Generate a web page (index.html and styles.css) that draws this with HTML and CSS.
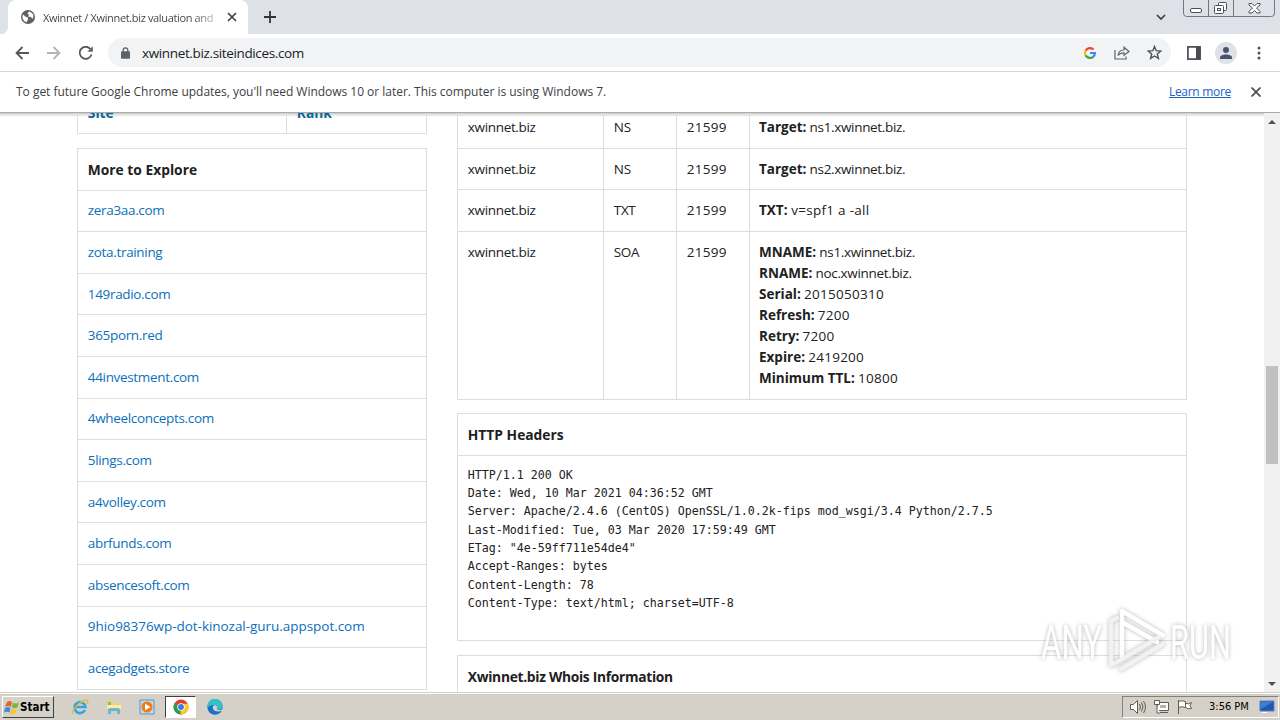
FILE: index.html
```
<!DOCTYPE html>
<html lang="en">
  <head>
    <meta charset="UTF-8" />
    <meta name="viewport" content="width=device-width, initial-scale=1.0" />
    <title>Xwinnet / Xwinnet.biz valuation</title>
    <link rel="stylesheet" href="styles.css">
  </head>
  <body>
    <div class="tabs">
      <div class="tab-left"></div>
      <div class="tab">
        <svg width="14" height="14" viewBox="0 0 14 14">
          <circle cx="7" cy="7" r="7" fill="#5f6368" />
          <path d="M2 4.5L5 7l2 .5v2L5.500 12.200C3 11.500 1.500 9.500 1.400 7zM8 1.500L6.500 3.500 8 5l-1 1.500 3 .5 1.500 2 1-3C12.500 4 10.500 2 8 1.500z" fill="#fff" />
        </svg>
        <span class="tab-title">Xwinnet / Xwinnet.biz valuation and</span>
        <svg class="tab-close" width="10" height="10" viewBox="0 0 10 10"><path d="M1 1l8 8M9 1L1 9" stroke="#3c4043" stroke-width="1.700" /></svg>
      </div>
      <svg class="plus" width="12" height="12" viewBox="0 0 12 12"><path d="M6 0v12M0 6h12" stroke="#303338" stroke-width="1.800" /></svg>
      <svg class="down" width="10" height="7" viewBox="0 0 10 7"><path d="M1 1l4 4 4-4" fill="none" stroke="#3c4043" stroke-width="1.700" /></svg>
      <div class="winbtns">
        <svg width="92" height="17" viewBox="0 0 92 17" fill="none" stroke="#72767e">
          <path d="M.5 0v13q0 3.500 3 3.500h85q3 0 3-3.500V0M25.500 0v16M50.500 0v16" />
          <rect x="7.500" y="8.500" width="11" height="4" rx="1.500" fill="#fff" stroke="#4b4f56" />
          <g stroke="#4b4f56" fill="#fff">
            <rect x="35.500" y="2.500" width="8" height="8" rx="1" />
            <rect x="31.500" y="5.500" width="9" height="8" rx="1" />
            <rect x="34.500" y="8.500" width="3" height="2" />
            <path d="M66 3.500h3l2.500 2.500L74 3.500h3v1.500L73.500 8l3.500 3.500v1.500h-3L71.500 10.500 69 13h-3v-1.500L69.500 8 66 5z" />
          </g>
        </svg>
      </div>
    </div>

    <div class="toolbar">
      <svg class="nav back" width="14" height="14" viewBox="0 0 14 14"><path d="M14 7H1.500M7.500 1L1.500 7l6 6" /></svg>
      <svg class="nav forward" width="14" height="14" viewBox="0 0 14 14"><path d="M0 7h12.500M6.500 1l6 6-6 6" /></svg>
      <svg class="nav reload" width="14" height="14" viewBox="0 0 14 14"><path d="M12.500 8.500A6 6 0 1 1 11.200 2.800L13 4.500" /><path d="M13.800.300v5.400H8.400z" fill="#5f6368" stroke="none" /></svg>
      <div class="address">
        <svg width="9" height="12" viewBox="0 0 9 12"><rect y="4.300" width="9" height="7.500" rx="1" fill="#5f6368" /><path d="M2.200 5V3.100a2.300 2.300 0 0 1 4.600 0V5" fill="none" stroke="#5f6368" stroke-width="1.300" /></svg>
        <span class="url">xwinnet.biz.siteindices.com</span>
        <svg class="google" width="12" height="12" viewBox="0 0 12 12" fill="none" stroke-width="2.200">
          <path d="M9.500 2.500A5 5 0 0 0 1.700 3.600" stroke="#ea4335" />
          <path d="M1.700 3.500a5 5 0 0 0 0 5" stroke="#fbbc05" />
          <path d="M1.700 8.400a5 5 0 0 0 7.500 1.400" stroke="#34a853" />
          <path d="M6 6h4.900a5 5 0 0 1-1.800 3.900" stroke="#4285f4" />
        </svg>
        <svg class="share" width="16" height="14" viewBox="0 0 16 14" fill="none" stroke="#5f6368" stroke-width="1.200"><path d="M1 4v9h11v-2.500M4 9.500C4.500 6 6.500 4 10 4V1.200L15 5.500 10 9.300V6.800C7.500 6.800 5.500 7.500 4 9.500z" /></svg>
        <svg class="star" width="15" height="15" viewBox="0 0 15 15"><path d="M7.500 1.500l1.700 4.200 4.600.300-3.500 3 1.100 4.400-3.900-2.400-3.900 2.400L4.700 9 1.200 6l4.600-.300z" fill="none" stroke="#4f5358" stroke-width="1.400" /></svg>
      </div>
      <svg class="panel" width="14" height="14" viewBox="0 0 14 14"><rect x=".9" y=".9" width="12.200" height="12.200" fill="none" stroke="#484b50" stroke-width="1.700" /><path d="M9 1h4v12H9z" fill="#484b50" /></svg>
      <svg class="avatar" width="22" height="22" viewBox="0 0 22 22"><circle cx="11" cy="11" r="11" fill="#dee1e6" /><circle cx="11" cy="8" r="3" fill="#47546b" /><path d="M5 17v-1.500c0-4 12-4 12 0V17z" fill="#47546b" /></svg>
      <svg class="dots" width="4" height="14" viewBox="0 0 4 14" fill="#4f5358"><circle cx="2" cy="2" r="1.500" /><circle cx="2" cy="7" r="1.500" /><circle cx="2" cy="12" r="1.500" /></svg>
    </div>

    <div class="infobar">
      <span class="info-text">To get future Google Chrome updates, you'll need Windows 10 or later. This computer is using Windows 7.</span>
      <a class="learn" href="#">Learn more</a>
      <svg width="10" height="10" viewBox="0 0 10 10"><path d="M.5.5l9 9M9.500.5l-9 9" stroke="#4f5358" stroke-width="1.800" /></svg>
    </div>

    <div class="viewport">
      <div class="page">
        <div class="side">
          <table class="box ranks">
            <tr><th class="site"><a href="#">Site</a></th><th><a href="#">Rank</a></th></tr>
          </table>
          <table class="box links">
            <tr><th>More to Explore</th></tr>
            <tr><td><a href="#">zera3aa.com</a></td></tr>
            <tr><td><a href="#">zota.training</a></td></tr>
            <tr><td><a href="#">149radio.com</a></td></tr>
            <tr><td><a href="#">365porn.red</a></td></tr>
            <tr><td><a href="#">44investment.com</a></td></tr>
            <tr><td><a href="#">4wheelconcepts.com</a></td></tr>
            <tr><td><a href="#">5lings.com</a></td></tr>
            <tr><td><a href="#">a4volley.com</a></td></tr>
            <tr><td><a href="#">abrfunds.com</a></td></tr>
            <tr><td><a href="#">absencesoft.com</a></td></tr>
            <tr><td><a class="long" href="#">9hio98376wp-dot-kinozal-guru.appspot.com</a></td></tr>
            <tr><td><a href="#">acegadgets.store</a></td></tr>
          </table>
        </div>
        <div class="main">
          <table class="box records">
            <tr><td class="host">xwinnet.biz</td><td class="type">NS</td><td class="ttl num">21599</td><td><b>Target:</b> ns1.xwinnet.biz.</td></tr>
            <tr><td>xwinnet.biz</td><td>NS</td><td class="num">21599</td><td><b>Target:</b> ns2.xwinnet.biz.</td></tr>
            <tr><td>xwinnet.biz</td><td>TXT</td><td class="num">21599</td><td class="num"><b>TXT:</b> v=spf1 a -all</td></tr>
            <tr>
              <td>xwinnet.biz</td><td>SOA</td><td class="num">21599</td>
              <td>
                <b>MNAME:</b> ns1.xwinnet.biz.<br>
                <b>RNAME:</b> noc.xwinnet.biz.<br>
                <b>Serial:</b> <span class="num">2015050310</span><br>
                <b>Refresh:</b> <span class="num">7200</span><br>
                <b>Retry:</b> <span class="num">7200</span><br>
                <b>Expire:</b> <span class="num">2419200</span><br>
                <b>Minimum TTL:</b> <span class="num">10800</span>
              </td>
            </tr>
          </table>
          <table class="box">
            <tr><th>HTTP Headers</th></tr>
            <tr><td><pre>HTTP/1.1 200 OK
Date: Wed, 10 Mar 2021 04:36:52 GMT
Server: Apache/2.4.6 (CentOS) OpenSSL/1.0.2k-fips mod_wsgi/3.4 Python/2.7.5
Last-Modified: Tue, 03 Mar 2020 17:59:49 GMT
ETag: "4e-59ff711e54de4"
Accept-Ranges: bytes
Content-Length: 78
Content-Type: text/html; charset=UTF-8

</pre></td></tr>
          </table>
          <table class="box">
            <tr><th class="whois">Xwinnet.biz Whois Information</th></tr>
          </table>
        </div>
      </div>
      <div class="scrollbar">
        <svg width="8" height="4" viewBox="0 0 8 4"><path d="M0 4l4-4 4 4z" fill="#505050" /></svg>
        <div class="thumb"></div>
        <svg class="scroll-down" width="8" height="4" viewBox="0 0 8 4"><path d="M0 0l4 4 4-4z" fill="#505050" /></svg>
      </div>
      <svg class="watermark" width="200" height="68" viewBox="0 0 200 68">
        <text x="4" y="52" textLength="61" lengthAdjust="spacingAndGlyphs">ANY</text>
        <g fill="none" stroke="#fff" stroke-width="4.500" stroke-linejoin="round" stroke-linecap="round">
          <path d="M85 52V4l41 24.500" />
          <path d="M85 15l35 20" />
          <path d="M80 11l-6 3v44l8-4M85 52l37-22M84 62l42-25" stroke="#f0f0f0" />
        </g>
        <text x="133" y="52" textLength="61" lengthAdjust="spacingAndGlyphs">RUN</text>
      </svg>
    </div>

    <div class="taskbar">
      <div class="start">
        <svg width="16" height="16" viewBox="0 0 16 16"><path d="M3 3q3-2 5 0L7 8Q4 6 1 8z" fill="#e8642c" /><path d="M9 3.500q3 2 6 0L13.500 8.500q-3 1.500-5.500 0z" fill="#76b843" /><path d="M1 9q3-2 5.500 0L5.500 13.500Q3 12 0 13.500z" fill="#3b8ede" /><path d="M7.500 9.500q3 2 5.500 0l-1.500 5q-3 1.500-5.200 0z" fill="#f7c52c" /></svg>
        <b>Start</b>
      </div>
      <svg class="ie" width="18" height="18" viewBox="0 0 18 18" fill="none"><path d="M14 12a5.500 5.500 0 1 1 .5-3H5" stroke="#35a4e4" stroke-width="2.600" /><path d="M2 16C-1 13 10 2 16 2q2 1 0 4" stroke="#e9b93c" stroke-width="1.300" /></svg>
      <svg class="folder" width="16" height="16" viewBox="0 0 16 16"><path d="M1 2h5l1 2h8v9H1z" fill="#ead27b" /><path d="M2 3h3v3H2z" fill="#7fc34e" /><path d="M1 6h14v4H1z" fill="#fbecab" /><path d="M2 15v-4q0-2 2-2h8q2 0 2 2v4h-3v-3H5v3z" fill="#68b6dd" /></svg>
      <svg class="media" width="16" height="16" viewBox="0 0 16 16"><path d="M1 1h14v14H1z" fill="#bdd8ef" stroke="#5f93c4" /><circle cx="8" cy="8" r="5.500" fill="#ef7d16" /><path d="M6 4.700v6.600L11.500 8z" fill="#fff" /></svg>
      <div class="task-active">
        <svg width="16" height="16" viewBox="0 0 16 16"><circle cx="8" cy="8" r="7.500" fill="#e33b2e" /><path d="M8 8L1.500 4.200A7.500 7.500 0 0 0 7.500 15.500z" fill="#2da04e" /><path d="M8 8l-.5 7.500A7.500 7.500 0 0 0 15 4.800H8z" fill="#fcc934" /><circle cx="8" cy="8" r="3.700" fill="#fff" /><circle cx="8" cy="8" r="2.900" fill="#377de8" /></svg>
      </div>
      <svg class="edge" width="16" height="16" viewBox="0 0 16 16"><circle cx="8" cy="8" r="7.700" fill="#1673c6" /><path d="M.5 7A7.600 7.600 0 0 1 15.700 7.500c0 3-4 3.500-6 2.500 1-2 0-4-3-4Q2.500 6 .5 9z" fill="#35bfc7" /><path d="M6 7q-1.500 5 5 5.500 2 0 3.500-1L16 14v-4q-4 2-6.300 0Q11 7 8 6z" fill="#d5d1c9" /></svg>
      <div class="tray">
        <svg class="tray-icons" width="66" height="16" viewBox="0 0 66 16" fill="#fff" stroke="#5f5d58">
          <path d="M1.500 5.500h3l4-4v13l-4-4h-3z" /><path d="M10.500 5q2 3 0 6M12.500 3.500q3 4.500 0 9M14.500 2q4 6 0 12" fill="none" />
          <path d="M28.500 3.500h11v8h-11z" /><path d="M31 13.500h8" /><path d="M31 6h6v3h-6z" fill="#b5b2aa" stroke="none" /><path d="M25.500 1.500h5v4h-5zM28 6v8h3" />
          <path d="M49.500 1v14M49.500 2.500q3-1.500 7 0v6q-4-1.500-7 0M56.500 4.500q3 1 6-1l-1.500 3 1.500 3q-3 1-6-1" />
        </svg>
        <span>3:56 PM</span>
        <svg class="desk" width="16" height="14" viewBox="0 0 16 14"><path d="M1 1h14v10H1z" fill="#1e57ae" stroke="#5c86bd" /><path d="M2 2h12L2 9z" fill="#3a80d1" /><path d="M3 12h5v1H3z" fill="#fff" /></svg>
      </div>
    </div>
  </body>
</html>
```
FILE: styles.css
```
* {
  box-sizing: border-box;
}
body {
  margin: 0;
  width: 1280px;
  height: 720px;
  overflow: hidden;
  display: flex;
  flex-direction: column;
  background: #fff;
  font-family: "Open Sans", "Noto Sans", sans-serif;
}
svg {
  display: block;
  flex: none;
}
a {
  color: #0b70bb;
  text-decoration: none;
}

/* browser chrome */
.tabs {
  display: flex;
  height: 34px;
  flex: none;
  background: #dee1e8;
}
.tab-left {
  width: 8px;
  border-bottom-right-radius: 7px;
  background: #dee1e8;
  box-shadow: 4px 4px 0 #fff;
  clip-path: inset(0);
}
.tab {
  display: flex;
  align-items: center;
  width: 240px;
  padding-left: 13px;
  border-radius: 8px 8px 0 0;
  background: #fff;
}
.tab-title {
  width: 174px;
  margin-left: 8px;
  white-space: nowrap;
  font-size: 11px;
  letter-spacing: -0.35px;
  color: transparent;
  background: linear-gradient(90deg, #3c4043 86%, #ccc);
  -webkit-background-clip: text;
  background-clip: text;
}
.tab-close {
  margin-left: 10px;
}
.plus {
  margin: 11px 0 0 16px;
}
.down {
  margin: 14px 17px 0 auto;
}
.winbtns {
  width: 97px;
}
.toolbar {
  display: flex;
  align-items: center;
  height: 38px;
  flex: none;
  padding-left: 15px;
  border-bottom: 1px solid #d3d5d8;
}
.nav {
  fill: none;
  stroke: #55595e;
  stroke-width: 1.8;
}
.forward {
  margin-left: 18px;
  stroke: #b3b6b9;
}
.reload {
  margin-left: 18px;
}
.address {
  display: flex;
  align-items: center;
  width: 1063px;
  height: 29px;
  margin-left: 15px;
  padding-left: 13px;
  border-radius: 15px;
  background: #f1f3f4;
}
.url {
  margin-left: 12px;
  font-size: 13.5px;
  letter-spacing: -0.36px;
  color: #202124;
}
.google {
  margin-left: auto;
}
.share {
  margin-left: 18px;
}
.star {
  margin: 0 9px 0 17px;
}
.panel {
  margin-left: 16px;
}
.avatar {
  margin-left: 14px;
}
.dots {
  margin-left: 20px;
}
.infobar {
  display: flex;
  align-items: center;
  height: 40px;
  flex: none;
  padding: 0 19px 0 16px;
  font-size: 12px;
  color: #3c4043;
}
.info-text,
.learn {
  margin-top: -2px;
  letter-spacing: -0.02px;
}
.learn {
  margin-right: 20px;
  margin-left: auto;
  letter-spacing: -0.3px;
  color: #1a64c4;
  text-decoration: underline;
}

/* page */
.viewport {
  position: relative;
  display: flex;
  height: 580px;
  flex: none;
  overflow: hidden;
  border-top: 1px solid #aaa;
  background: linear-gradient(#ccc, #fff 4px);
}
.page {
  display: flex;
  gap: 30px;
  width: 1264px;
  padding-left: 77px;
  margin-top: -21.4px;
  font-size: 13.5px;
  line-height: 21px;
  color: #212121;
}
.side {
  width: 350px;
}
.main {
  width: 730px;
  margin-top: 14.6px;
}
.box {
  width: 100%;
  margin-bottom: 13.8px;
  border-collapse: separate;
  border-spacing: 0;
  border: solid #ddd;
  border-width: 1px 0 0 1px;
  table-layout: fixed;
}
.box th,
.box td {
  padding: 9.8px;
  border: solid #ddd;
  border-width: 0 1px 1px 0;
  text-align: left;
  vertical-align: top;
}
.box th {
  font-size: 13.8px;
}
.box .whois {
  letter-spacing: -0.3px;
}
.ranks a {
  color: #0a6797;
}
.links td,
.records td {
  letter-spacing: -0.33px;
}
.links .long {
  letter-spacing: -0.04px;
}
.records b {
  letter-spacing: 0;
}
.records .num {
  letter-spacing: 0.27px;
}
.records td:last-child {
  padding-left: 9px;
}
.site {
  width: 209px;
}
.host {
  width: 146px;
}
.type,
.ttl {
  width: 73px;
}
pre {
  margin: 0;
  font-family: "DejaVu Sans Mono", monospace;
  font-size: 11.63px;
  line-height: 18.3px;
}
.scrollbar {
  display: flex;
  flex-direction: column;
  align-items: center;
  width: 16px;
  padding: 7px 0 6px;
  background: #f1f1f1;
}
.thumb {
  width: 12px;
  height: 98px;
  margin-top: 242px;
  background: #c1c1c1;
}
.scroll-down {
  margin-top: auto;
}
.watermark {
  position: absolute;
  left: 1037px;
  top: 494px;
  overflow: visible;
  opacity: 0.85;
  filter: drop-shadow(0 0 2px #aaa);
}
.watermark text {
  font: 49px Roboto, sans-serif;
  fill: #fff;
}

/* taskbar */
.taskbar {
  display: flex;
  align-items: center;
  height: 28px;
  flex: none;
  border-top: 1px solid #d5d1c9;
  background: #d5d1c9;
  box-shadow: inset 0 1px 0 #fff;
}
.start {
  display: flex;
  align-items: center;
  width: 52px;
  height: 22px;
  margin-left: 2px;
  padding-left: 1px;
  border: 1px solid;
  border-color: #fff #404040 #404040 #fff;
  font: 11.500px "DejaVu Sans Condensed", sans-serif;
}
.ie {
  margin-left: 17px;
}
.folder,
.media {
  margin-left: 17px;
}
.task-active {
  display: flex;
  align-items: center;
  justify-content: center;
  width: 31px;
  height: 22px;
  margin-left: 10px;
  border: 1px solid;
  border-color: #404040 #fff #fff #404040;
  background: #fff;
}
.edge {
  margin-left: 11px;
}
.tray {
  display: flex;
  align-items: center;
  width: 157px;
  height: 22px;
  margin: 0 1px 0 auto;
  padding-left: 6px;
  border: 1px solid;
  border-color: #808080 #fff #fff #808080;
  font: 11px "DejaVu Sans Condensed", sans-serif;
}
.tray span {
  margin-left: 14px;
}
.desk {
  margin: 0 3px 0 auto;
}
```
